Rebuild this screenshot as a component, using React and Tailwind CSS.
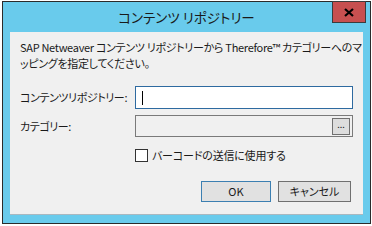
export default function App() {
  const font = { fontFamily: '"Noto Sans CJK JP", "Noto Sans", sans-serif' };
  return (
    <div className="w-[372px] h-[226px] bg-white pl-[2px] pt-[1px] [font-feature-settings:'palt']" style={font}>
      <div className="w-[369px] h-[223px] bg-[#69cbec] border border-[#2b2b2b] flex flex-col">
        {/* Title bar */}
        <div className="relative h-[30px] flex items-center justify-center">
          <span className="text-[13.5px] text-[#1a1a1a] leading-none mt-[1px]">コンテンツ リポジトリー</span>
          <div className="absolute right-[4px] top-[-1px] w-[34px] h-[22px] bg-[#c75050] border border-[#3c3c3c] flex items-center justify-center">
            <svg width="10" height="9" viewBox="0 0 10 9">
              <path d="M1 1 L9 8 M9 1 L1 8" stroke="#000" strokeWidth="2.2" />
            </svg>
          </div>
        </div>
        {/* Client area */}
        <div className="ml-[7px] w-[353px] h-[183px] bg-[#f0f0f0] border-b border-[#a9b8c0] pl-[10px] pt-[7px] text-[11px] text-[#1a1a1a]">
          <p className="leading-[16px] whitespace-nowrap tracking-[-0.3px]">
            SAP Netweaver コンテンツ リポジトリーから Therefore™ カテゴリーへのマ
            <br />
            ッピングを指定してください。
          </p>
          <div className="mt-[15px] flex items-center h-[23px]">
            <span className="w-[115px] whitespace-nowrap tracking-[-0.4px]">コンテンツリポジトリー:</span>
            <div className="w-[218px] h-[23px] bg-white border border-[#2e6aa0] flex items-center pl-[6px]">
              <div className="w-px h-[14px] bg-black" />
            </div>
          </div>
          <div className="mt-[6px] flex items-center h-[22px]">
            <span className="w-[115px] whitespace-nowrap tracking-[-0.4px]">カテゴリー:</span>
            <div className="w-[218px] h-[22px] bg-[#f0f0f0] border border-[#7a7a7a] flex items-center justify-end pr-[2px]">
              <div className="w-[18px] h-[17px] bg-[#dddddd] border border-[#707070] flex items-center justify-center text-[9px] leading-none pb-[3px]">
                ...
              </div>
            </div>
          </div>
          <div className="mt-[12px] ml-[115px] flex items-center gap-[4px]">
            <div className="w-[13px] h-[13px] bg-white border border-[#333]" />
            <span className="leading-none whitespace-nowrap tracking-[-0.2px]">バーコードの送信に使用する</span>
          </div>
          <div className="mt-[19px] flex justify-end gap-[7px] pr-[12px]">
            <button className="w-[70px] h-[21px] bg-[#e1e1e1] border border-[#3c7fb1] text-[11px] leading-none">OK</button>
            <button className="w-[73px] h-[21px] bg-[#e1e1e1] border border-[#707070] text-[11px] leading-none">キャンセル</button>
          </div>
        </div>
      </div>
    </div>
  );
}
